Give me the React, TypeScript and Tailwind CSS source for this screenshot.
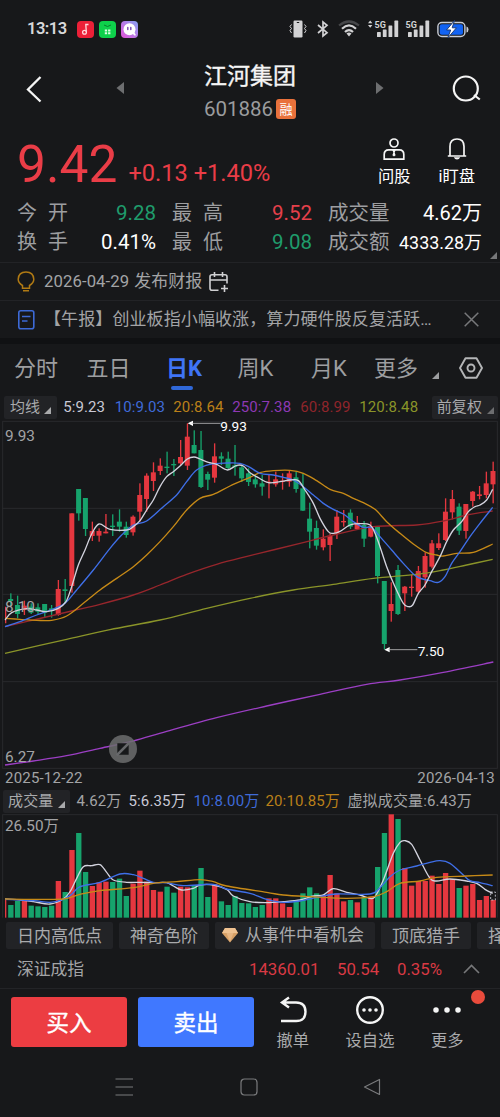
import type { ReactNode } from "react";

type Point = [number, number];

// [direction, high, body top, body bottom, low, volume top]
type Candle = ["u" | "d", number, number, number, number, number];

const UP = "#e5373f";
const DOWN = "#16a36c";

const candles: Candle[] = [
  ["d", 610, 627, 633, 650, 360],
  ["d", 617, 645, 672, 685, 348],
  ["u", 632, 647, 660, 675, 345],
  ["d", 640, 650, 668, 672, 362],
  ["d", 640, 652, 665, 672, 364],
  ["d", 642, 642, 668, 683, 366],
  ["d", 645, 655, 662, 683, 362],
  ["u", 570, 597, 675, 677, 288],
  ["d", 567, 598, 603, 640, 321],
  ["u", 370, 370, 588, 608, 195],
  ["d", 297, 297, 370, 392, 144],
  ["d", 324, 324, 417, 438, 261],
  ["u", 395, 423, 438, 453, 303],
  ["u", 415, 423, 437, 455, 292],
  ["u", 372, 425, 430, 430, 290],
  ["d", 373, 407, 411, 438, 291],
  ["d", 358, 395, 410, 425, 281],
  ["d", 395, 410, 435, 443, 333],
  ["u", 376, 380, 427, 437, 296],
  ["u", 280, 315, 365, 395, 257],
  ["u", 250, 257, 327, 365, 290],
  ["u", 217, 247, 273, 303, 315],
  ["u", 205, 227, 243, 255, 320],
  ["d", 185, 230, 234, 250, 305],
  ["d", 207, 222, 226, 258, 323],
  ["u", 150, 201, 220, 225, 305],
  ["u", 100, 140, 227, 240, 307],
  ["d", 121, 165, 190, 190, 300],
  ["d", 123, 180, 291, 294, 249],
  ["d", 245, 252, 269, 300, 336],
  ["u", 160, 199, 263, 278, 297],
  ["d", 187, 199, 206, 225, 349],
  ["d", 185, 206, 234, 240, 360],
  ["d", 165, 226, 231, 257, 333],
  ["d", 225, 232, 265, 276, 354],
  ["d", 235, 250, 276, 288, 355],
  ["d", 255, 268, 283, 293, 366],
  ["d", 255, 280, 290, 317, 360],
  ["u", 255, 275, 279, 325, 340],
  ["u", 245, 268, 283, 290, 340],
  ["u", 250, 272, 276, 299, 355],
  ["u", 240, 250, 275, 290, 366],
  ["d", 245, 262, 297, 308, 345],
  ["d", 250, 295, 362, 363, 325],
  ["d", 338, 386, 425, 475, 307],
  ["d", 392, 414, 467, 479, 325],
  ["u", 418, 446, 472, 481, 330],
  ["u", 430, 437, 465, 513, 270],
  ["u", 360, 380, 430, 447, 325],
  ["u", 360, 393, 397, 410, 349],
  ["d", 358, 368, 410, 417, 345],
  ["u", 378, 398, 417, 420, 352],
  ["d", 393, 405, 446, 471, 336],
  ["u", 395, 408, 440, 442, 335],
  ["d", 408, 411, 558, 580, 246],
  ["d", 573, 573, 762, 778, 144],
  ["u", 577, 642, 663, 695, 88],
  ["d", 525, 540, 672, 675, 102],
  ["u", 588, 590, 610, 663, 249],
  ["u", 555, 590, 594, 620, 302],
  ["u", 528, 543, 605, 610, 288],
  ["u", 487, 498, 562, 593, 288],
  ["u", 450, 460, 530, 535, 272],
  ["u", 430, 460, 474, 480, 297],
  ["u", 325, 365, 450, 453, 264],
  ["u", 300, 327, 367, 388, 282],
  ["d", 340, 350, 422, 435, 309],
  ["u", 342, 342, 423, 446, 302],
  ["u", 303, 305, 333, 350, 297],
  ["u", 288, 313, 318, 328, 345],
  ["u", 245, 280, 315, 325, 333],
  ["u", 215, 243, 283, 340, 345],
];

const candleX = (i: number) => 32 + i * 20.38;

const priceLines: { color: string; points: Point[] }[] = [
  {
    color: "#9c3fc4",
    points: [[15, 1125], [100, 1113], [200, 1097], [300, 1075], [400, 1053], [500, 1024], [650, 983], [800, 948], [960, 913], [1100, 883], [1200, 870], [1330, 847], [1480, 816]],
  },
  {
    color: "#8a9429",
    points: [[15, 790], [200, 748], [330, 719], [480, 690], [620, 655], [750, 625], [880, 600], [1000, 583], [1120, 565], [1250, 553], [1330, 540], [1400, 525], [1478, 508]],
  },
  {
    color: "#97262c",
    points: [[15, 710], [100, 690], [215, 663], [300, 643], [400, 615], [480, 585], [560, 553], [650, 523], [750, 497], [900, 460], [1000, 435], [1120, 410], [1250, 405], [1330, 393], [1400, 375], [1440, 368], [1478, 363]],
  },
  {
    color: "#c78a17",
    points: [[15, 685], [60, 688], [110, 691], [155, 691], [200, 678], [250, 640], [300, 600], [350, 565], [400, 530], [440, 495], [480, 455], [520, 410], [560, 360], [600, 325], [640, 313], [690, 288], [750, 262], [780, 248], [820, 242], [870, 241], [910, 250], [950, 272], [990, 298], [1030, 310], [1060, 325], [1090, 338], [1125, 358], [1160, 395], [1200, 430], [1240, 462], [1280, 488], [1310, 495], [1330, 498], [1370, 490], [1420, 487], [1478, 462]],
  },
  {
    color: "#3f6fe8",
    points: [[15, 710], [60, 695], [110, 675], [160, 657], [195, 640], [230, 600], [280, 540], [330, 475], [365, 435], [400, 405], [440, 393], [490, 350], [530, 315], [560, 275], [590, 240], [630, 223], [680, 219], [720, 220], [750, 232], [780, 250], [820, 255], [850, 262], [880, 270], [910, 290], [940, 315], [970, 340], [1000, 358], [1030, 372], [1060, 395], [1090, 412], [1115, 413], [1140, 440], [1175, 480], [1210, 520], [1250, 560], [1290, 572], [1315, 577], [1335, 560], [1355, 520], [1380, 485], [1410, 440], [1440, 400], [1478, 352]],
  },
  {
    color: "#d3d3de",
    points: [[15, 690], [35, 668], [80, 656], [110, 660], [140, 665], [175, 655], [198, 635], [215, 590], [235, 525], [255, 480], [275, 432], [297, 402], [330, 418], [380, 420], [400, 410], [420, 392], [440, 360], [460, 330], [480, 290], [500, 260], [520, 245], [540, 228], [562, 207], [582, 201], [600, 207], [625, 217], [650, 223], [682, 240], [710, 226], [730, 228], [750, 248], [775, 263], [805, 278], [840, 275], [870, 270], [895, 272], [915, 300], [940, 340], [960, 385], [985, 425], [1000, 430], [1020, 424], [1050, 405], [1080, 401], [1110, 405], [1125, 430], [1140, 470], [1160, 530], [1185, 590], [1210, 640], [1225, 650], [1238, 645], [1255, 610], [1275, 585], [1295, 545], [1320, 500], [1340, 455], [1360, 420], [1385, 395], [1405, 365], [1425, 350], [1440, 345], [1460, 330], [1478, 298]],
  },
];

const volumeLines: { color: string; points: Point[] }[] = [
  {
    color: "#d3d3de",
    points: [[15, 342], [50, 344], [100, 350], [150, 357], [190, 342], [210, 320], [230, 280], [250, 245], [275, 242], [300, 239], [320, 262], [340, 285], [380, 292], [420, 292], [460, 293], [500, 293], [520, 303], [545, 315], [580, 310], [600, 300], [640, 300], [680, 313], [700, 333], [750, 350], [800, 353], [850, 350], [900, 345], [940, 333], [970, 330], [1000, 311], [1040, 322], [1080, 330], [1110, 340], [1125, 335], [1150, 285], [1180, 205], [1200, 172], [1215, 167], [1235, 178], [1260, 225], [1290, 280], [1310, 288], [1350, 282], [1400, 288], [1430, 295], [1455, 313], [1478, 325]],
  },
  {
    color: "#3f6fe8",
    points: [[15, 343], [100, 347], [150, 352], [190, 343], [215, 328], [240, 305], [300, 292], [360, 267], [400, 269], [430, 280], [460, 292], [500, 293], [550, 302], [640, 298], [680, 312], [750, 325], [800, 343], [850, 352], [900, 348], [960, 335], [1010, 327], [1110, 327], [1140, 308], [1170, 275], [1200, 255], [1250, 243], [1290, 232], [1320, 227], [1350, 235], [1390, 270], [1410, 287], [1440, 293], [1478, 302]],
  },
  {
    color: "#c78a17",
    points: [[15, 342], [100, 343], [190, 342], [240, 328], [300, 317], [400, 308], [460, 295], [530, 290], [600, 284], [640, 290], [680, 303], [800, 322], [850, 330], [930, 335], [1040, 340], [1120, 335], [1160, 320], [1200, 295], [1260, 288], [1310, 277], [1400, 273], [1478, 270]],
  },
];

// Catmull-Rom through the points, written as cubic beziers
function smooth(points: Point[]) {
  let d = `M${points[0][0]} ${points[0][1]}`;
  for (let i = 0; i < points.length - 1; i++) {
    const p0 = points[i - 1] ?? points[i];
    const p1 = points[i];
    const p2 = points[i + 1];
    const p3 = points[i + 2] ?? p2;
    d += `C${p1[0] + (p2[0] - p0[0]) / 6} ${p1[1] + (p2[1] - p0[1]) / 6} ${p2[0] - (p3[0] - p1[0]) / 6} ${p2[1] - (p3[1] - p1[1]) / 6} ${p2[0]} ${p2[1]}`;
  }
  return d;
}

function Corner({ className = "" }: { className?: string }) {
  return (
    <svg className={className} width="7" height="7" viewBox="0 0 7 7">
      <path d="M7 0v7H0z" fill="currentColor" />
    </svg>
  );
}

function Signal({ updown = false }: { updown?: boolean }) {
  return (
    <svg width="31" height="20" viewBox="0 0 31 20" fill="#d2d2d4">
      {updown && <path d="M0 4.2 2.2 1.4 4.4 4.2zM0 6 2.2 8.8 4.4 6z" />}
      <text x="6.5" y="8.5" fontSize="9" fontWeight="700" className="font-['Roboto']">
        5G
      </text>
      <rect x="9" y="13" width="3.8" height="5" rx=".6" />
      <rect x="14.8" y="10.5" width="3.8" height="7.5" rx=".6" />
      <rect x="20.5" y="6.5" width="3.8" height="11.5" rx=".6" />
      <rect x="26.4" y="1.6" width="3.8" height="16.4" rx=".6" />
    </svg>
  );
}

function StatusBar() {
  return (
    <div className="flex h-[58px] items-center pl-[27px] pr-[31px]">
      <span className="w-[50px] text-[16.5px] font-semibold tracking-[-0.5px] text-[#d8d8da]">13:13</span>
      <div className="flex gap-[5px]">
        <svg width="17" height="17" viewBox="0 0 17 17">
          <rect width="17" height="17" rx="4" fill="#ec2038" />
          <path d="M11.5 3.5H8.8l.5 7.5" fill="none" stroke="#ffd9dc" strokeWidth="1.3" />
          <circle cx="7.5" cy="11.3" r="1.9" fill="none" stroke="#ffd9dc" strokeWidth="1.3" />
        </svg>
        <svg width="17" height="17" viewBox="0 0 17 17">
          <rect width="17" height="17" rx="4" fill="#0ed04b" />
          <path d="M5 4Q8.5 7 12 4" fill="none" stroke="#087d2d" strokeWidth="1" />
          <path d="M5.8 8.5h2.3v2H5.8zM9.1 8.5h2.3v2H9.1zM5.8 11.3h2.3v2H5.8zM9.1 11.3h2.3v2H9.1z" fill="#d9ffe2" />
        </svg>
        <svg width="17" height="17" viewBox="0 0 17 17">
          <defs>
            <linearGradient id="chat" x1="0" y1="1" x2="1" y2="0">
              <stop offset="0" stopColor="#e553d8" />
              <stop offset=".5" stopColor="#b77ae6" />
              <stop offset="1" stopColor="#86a2f5" />
            </linearGradient>
          </defs>
          <rect width="17" height="17" rx="4" fill="url(#chat)" />
          <circle cx="8.5" cy="8.3" r="6" fill="#fff" />
          <path d="m11 11 2 3.500 2-.3-2-3.500z" fill="#fff" />
          <path d="M6.8 6.500v2M9.8 6.500v2" stroke="#7d4fb8" strokeWidth="1.5" strokeLinecap="round" />
        </svg>
      </div>
      <div className="ml-auto flex items-center">
        <svg className="mr-[10px]" width="18" height="18" viewBox="0 0 18 18">
          <rect x="4.5" y=".5" width="9" height="17" rx="1.2" fill="#d2d2d4" />
          <path d="M7.8 2.5h2.4" stroke="#17181a" />
          <path d="M2.5 4.5 1 6.500l1.500 2L1 10.500l1.500 2.500M15.500 4.500l1.500 2-1.500 2 1.500 2-1.500 2.500" fill="none" stroke="#d2d2d4" />
        </svg>
        <svg className="mr-[9px]" width="12" height="18" viewBox="0 0 12 18">
          <path d="m1 5 9 7.700-4 3.300V2l4 3.300L1 13" fill="none" stroke="#d2d2d4" strokeWidth="1.7" />
        </svg>
        <svg className="mr-2" width="22" height="18" viewBox="0 0 22 18" fill="none" strokeWidth="2.2">
          <path d="M1 5.500Q11-2.500 21 5.500" stroke="#46474a" />
          <path d="M4 8.700Q11 2.200 18 8.700" stroke="#d2d2d4" />
          <path d="M7 12Q11 8 15 12" stroke="#d2d2d4" />
          <path d="m8.500 13.500 2.500 3 2.500-3q-2.500-2-5 0z" fill="#d2d2d4" stroke="none" />
        </svg>
        <Signal updown />
        <Signal />
        <svg className="ml-[7px]" width="32" height="19" viewBox="0 0 32 19">
          <rect x=".9" y="2.5" width="27" height="14" rx="4" fill="none" stroke="#c9cdd6" strokeWidth="1.4" />
          <rect x="2.8" y="4.3" width="23.2" height="10.4" rx="2" fill="#1263f3" />
          <path d="M29.500 6.500q2 .5 2 3t-2 3z" fill="#c9cdd6" />
          <path d="M17.500.5 9.500 10h4.200l-3 8 8.800-10.200h-4.300z" fill="#fff" stroke="#1d3c78" strokeWidth="1" />
        </svg>
      </div>
    </div>
  );
}

function Header() {
  return (
    <header className="flex h-[74px] items-center pl-[26px] pr-[19px]">
      <svg className="mt-[-12px]" width="16" height="28" viewBox="0 0 16 28">
        <path d="M14.500 2 2 14.500 14.500 26.500" fill="none" stroke="#f5f5f5" strokeWidth="2.300" />
      </svg>
      <div className="ml-[74px] flex w-[268px] items-center justify-between">
        <svg className="mt-[-14px]" width="8" height="12" viewBox="0 0 8 12">
          <path d="M8 0v12L.5 6z" fill="#6d6e70" />
        </svg>
        <div className="mt-[-6px] flex flex-col items-center">
          <h1 className="text-[23px] leading-[34px] text-[#f5f5f5] [-webkit-text-stroke:0.35px_#f5f5f5]">江河集团</h1>
          <div className="flex h-[30px] items-center gap-[3px]">
            <span className="text-[20.5px] text-[#9b9c9e]">601886</span>
            <span className="flex size-[20px] items-center justify-center rounded-[3px] bg-[#e9713b] text-[13px] leading-none text-white">
              融
            </span>
          </div>
        </div>
        <svg className="mt-[-14px]" width="8" height="12" viewBox="0 0 8 12">
          <path d="M0 0v12l7.500-6z" fill="#6d6e70" />
        </svg>
      </div>
      <svg className="mt-[-12px] ml-auto" width="29" height="28" viewBox="0 0 29 28" fill="none" stroke="#f5f5f5" strokeWidth="2.2">
        <circle cx="13.8" cy="13.5" r="12" />
        <path d="m22 20 5.800 4.500" />
      </svg>
    </header>
  );
}

function Quote() {
  return (
    <div className="flex h-[66px] justify-between pl-[17px] pr-[25px]">
      <div className="flex items-baseline text-[#ea3d47]">
        <span className="text-[51.5px] leading-[66px]">9.42</span>
        <span className="ml-[11px] -translate-y-px text-[23.6px]">+0.13 +1.40%</span>
      </div>
      <div className="flex gap-[28px] pt-[6px] text-[16.3px] leading-[22px] text-white">
        <div className="flex flex-col items-center">
          <svg width="22" height="22" viewBox="0 0 22 22" fill="none" stroke="#f5f5f5" strokeWidth="1.7">
            <circle cx="11" cy="5" r="4" />
            <path d="M1.200 21.200v-4.700q0-4.700 4.500-4.700h10.600q4.500 0 4.500 4.700v4.700z" />
            <path d="m9.300 12 1 2.500-.9 2.700L11 18.500l1.600-1.300-.9-2.700 1-2.500z" fill="#f5f5f5" stroke="none" />
          </svg>
          <span className="mt-[6px]">问股</span>
        </div>
        <div className="flex flex-col items-center">
          <svg width="20" height="22" viewBox="0 0 20 22" fill="none" stroke="#f5f5f5" strokeWidth="1.7">
            <path d="M3 17.800V8.500Q3 1 10 1t7 7.500v9.300M.8 18h18.400" />
            <path d="M6.800 19.300h6.400q-1 2.300-3.200 2.300t-3.200-2.300z" fill="#f5f5f5" stroke="none" />
          </svg>
          <span className="mt-[6px]">i盯盘</span>
        </div>
      </div>
    </div>
  );
}

function Label({ children }: { children: string }) {
  return (
    <span className="flex w-[51px] justify-between text-[20px] text-[#9d9ea0]">
      {children.split("").map((c) => (
        <span key={c}>{c}</span>
      ))}
    </span>
  );
}

function Stats() {
  return (
    <div className="relative grid h-[64px] grid-cols-[50px_89px_16px_51px_89px_16px_64px_1fr] content-start pl-[17px] pr-[18px] pt-px text-[20.5px] leading-[29px]">
      <Label>今开</Label>
      <span className="text-right text-[#1f9c6c]">9.28</span>
      <span />
      <Label>最高</Label>
      <span className="text-right text-[#e5404b]">9.52</span>
      <span />
      <span className="text-[#9d9ea0]">成交量</span>
      <span className="text-right text-[20px] text-white">4.62万</span>
      <Label>换手</Label>
      <span className="text-right text-white">0.41%</span>
      <span />
      <Label>最低</Label>
      <span className="text-right text-[#1f9c6c]">9.08</span>
      <span />
      <span className="text-[#9d9ea0]">成交额</span>
      <span className="whitespace-nowrap text-right text-[17.9px] text-white">4333.28万</span>
      <Corner className="absolute bottom-[3px] right-[3px] text-[#77787a]" />
    </div>
  );
}

function Notices() {
  return (
    <div className="text-[#a3a4a6]">
      <div className="flex h-[38px] items-center border-t border-[#222326] pl-[17px] text-[16.7px]">
        <svg width="18" height="21" viewBox="0 0 18 21" fill="none" stroke="#b07a14" strokeWidth="1.5">
          <path d="M5.500 14.500Q1.200 12 1.200 8.300 1.500 1 9 1t7.800 7.300q0 3.700-4.300 6.200v2.700h-7zM6 19.700h6" />
        </svg>
        <span className="ml-[9px] tracking-[0.1px]">2026-04-29</span>
        <span className="ml-[5px] text-[17px]">发布财报</span>
        <svg className="ml-[7px]" width="20" height="20" viewBox="0 0 20 20" fill="none" stroke="#d0d0d2" strokeWidth="1.6">
          <path d="M9.500 18.200H3q-2 0-2-2V4.800q0-2 2-2h13q2 0 2 2v6.700M1 8h17M5.500 0v5M13.500 0v5M15.500 13v7M12 16.500h7" />
        </svg>
      </div>
      <div className="flex h-[38px] items-center border-t border-[#222326] pl-[18px] pr-[21px] text-[17px]">
        <svg width="17" height="20" viewBox="0 0 17 20" fill="none" stroke="#3d6ad6" strokeWidth="1.6">
          <rect x=".8" y=".8" width="15" height="18" rx="2" />
          <path d="M4 6.500h8.500M4 11h5.500" />
        </svg>
        <span className="ml-[9px] whitespace-nowrap tracking-[0.1px]">【午报】创业板指小幅收涨，算力硬件股反复活跃…</span>
        <svg className="ml-auto shrink-0" width="15" height="15" viewBox="0 0 15 15">
          <path d="m.7.7 13.600 13.600M14.300.7.700 14.300" stroke="#77787a" strokeWidth="1.5" />
        </svg>
      </div>
    </div>
  );
}

const tabs = ["分时", "五日", "日K", "周K", "月K", "更多"];

function Tabs() {
  return (
    <nav className="grid h-[55px] grid-cols-[72px_73px_78px_65px_82px_52px_1fr] border-t-[6px] border-[#101113] text-center text-[22px] leading-[50px] text-[#9d9ea0]">
      {tabs.map((tab) =>
        tab === "日K" ? (
          <span key={tab} className="relative font-bold text-[#3f74f5]">
            {tab}
            <i className="absolute bottom-[4px] left-[calc(50%-2px)] h-[4px] w-[22px] -translate-x-1/2 rounded-full bg-[#3068d8]" />
          </span>
        ) : (
          <span key={tab}>{tab}</span>
        ),
      )}
      <span className="flex h-[49px] items-center pl-[10px]">
        <Corner className="mt-[13px]" />
        <svg className="ml-[20px] mt-[-2px]" width="24" height="22" viewBox="0 0 24 22" fill="none" stroke="#b4b5b7" strokeWidth="1.9">
          <path d="M6.500 1.200h11L23 11l-5.500 9.800h-11L1 11z" strokeLinejoin="round" />
          <circle cx="12" cy="11" r="3.5" />
        </svg>
      </span>
    </nav>
  );
}

function Pill({ children }: { children: ReactNode }) {
  return (
    <span className="flex h-[23px] items-center rounded-[2px] bg-[#222326] text-[15px] text-[#a9aaac]">{children}</span>
  );
}

function PriceChart() {
  return (
    <section>
      <div className="flex h-[27px] items-center pl-[4px] pr-[2px] pt-[1px] text-[15px] tracking-[0.1px]">
        <Pill>
          <span className="ml-[6px]">均线</span>
          <Corner className="ml-[4px] mr-[6px] mt-[6px]" />
        </Pill>
        <span className="ml-[6px] w-[51.5px] text-[#c9c9d6]">5:9.23</span>
        <span className="w-[58.5px] text-[#3f6bd8]">10:9.03</span>
        <span className="w-[59px] text-[#bb8019]">20:8.64</span>
        <span className="w-[68px] text-[#8e38b4]">250:7.38</span>
        <span className="w-[59px] text-[#8f252b]">60:8.99</span>
        <span className="text-[#8a9429]">120:8.48</span>
        <span className="ml-auto">
          <Pill>
            <span className="ml-[5px]">前复权</span>
            <Corner className="ml-[5px] mr-[4px] mt-[6px] text-[#6d6e70]" />
          </Pill>
        </span>
      </div>
      <svg className="block overflow-visible font-['Roboto']" width="500" height="349" viewBox="0 90 1500 1047">
        <path
          d="M7 94H1493M7 355H1493M7 613H1493M7 875H1493M7 1135H1493M8 94V1135M1492 94V1135"
          stroke="#292a2d"
          strokeWidth="3"
        />
        <path d="M17 650V700" stroke={UP} strokeWidth="4" />
        {candles.map(([dir, high, top, bottom, low], i) => (
          <g key={i} fill={dir === "u" ? UP : DOWN}>
            <rect x={candleX(i) - 1.5} y={high} width="4" height={low - high} />
            <rect x={candleX(i) - 7.5} y={top} width="15" height={bottom - top} />
          </g>
        ))}
        {priceLines.map(({ color, points }) => (
          <path key={color} d={smooth(points)} fill="none" stroke={color} strokeWidth="4" />
        ))}
        <g fill="#a3a4a6" fontSize="46">
          <text x="15" y="152">9.93</text>
          <text x="15" y="665">8.10</text>
          <text x="15" y="1116">6.27</text>
        </g>
        <g fill="#fff" fontSize="41">
          <path d="M563 100l16-8v16zM1153 779l16-8v16z" />
          <path d="M575 100h87M1165 779h87" stroke="#b8b8ba" strokeWidth="2.5" />
          <text x="661" y="123">9.93</text>
          <text x="1253" y="798">7.50</text>
        </g>
        <circle cx="369" cy="1077" r="42" fill="#6c6d6f" fillOpacity=".85" />
        <path d="M352 1094v-34h34zM386 1060v34h-34z" fill="#17181a" />
        <path d="m350 1096 38-38" stroke="#66676a" strokeWidth="8" />
      </svg>
      <div className="flex h-[19px] items-center justify-between pl-[5px] pr-[5px] text-[15px] tracking-[0.2px] text-[#a3a4a6]">
        <span>2025-12-22</span>
        <span>2026-04-13</span>
      </div>
    </section>
  );
}

function VolumeChart() {
  return (
    <section>
      <div className="flex h-[26px] items-center whitespace-nowrap pl-[3px] text-[15px] tracking-[0.15px]">
        <Pill>
          <span className="ml-[5px]">成交量</span>
          <Corner className="ml-[5px] mr-[5px] mt-[6px]" />
        </Pill>
        <span className="ml-[6px] w-[52px] text-[#a3a4a6]">4.62万</span>
        <span className="w-[65px] text-[#c9c9d6]">5:6.35万</span>
        <span className="w-[72px] text-[#3f6bd8]">10:8.00万</span>
        <span className="w-[82px] text-[#bb8019]">20:10.85万</span>
        <span className="text-[#a3a4a6]">虚拟成交量:6.43万</span>
      </div>
      <svg className="block font-['Roboto','Noto_Sans_CJK_SC',sans-serif]" width="500" height="104" viewBox="0 87 1500 312">
        <path d="M7 89H1493M8 89V398M1492 89V398" stroke="#292a2d" strokeWidth="3" />
        <rect x="15" y="342" width="4" height="56" fill={UP} />
        {candles.map(([dir, , , , , vol], i) => (
          <rect key={i} x={candleX(i) - 7.5} y={vol} width="16" height={398 - vol} fill={dir === "u" ? UP : DOWN} />
        ))}
        {volumeLines.map(({ color, points }) => (
          <path key={color} d={smooth(points)} fill="none" stroke={color} strokeWidth="4" />
        ))}
        <rect x="1472" y="321" width="14" height="24" fill="none" stroke="#d3d3de" strokeWidth="2.5" strokeDasharray="6 5" />
        <text x="15" y="137" fontSize="46" fill="#a3a4a6">
          26.50万
        </text>
      </svg>
    </section>
  );
}

function Chips() {
  return (
    <div className="flex h-[32px] gap-[6px] overflow-hidden whitespace-nowrap pl-[6px] pt-[4px] text-[17px] leading-[29px] text-[#a9aaac]">
      <span className="h-[27px] w-[107px] shrink-0 rounded-[2px] bg-[#222326] text-center">日内高低点</span>
      <span className="h-[27px] w-[90px] shrink-0 rounded-[2px] bg-[#222326] text-center">神奇色阶</span>
      <span className="flex h-[27px] w-[160px] shrink-0 items-center rounded-[2px] bg-[#222326] pl-[7px]">
        <svg className="mr-[7px]" width="16" height="15" viewBox="0 0 16 15">
          <path d="M3 0h10l3 5-8 9.500L0 5z" fill="#d7a066" />
          <path d="M3 0h10l3 5H0z" fill="#efc291" />
          <path d="m4.500 5 3.500 9 3.500-9z" fill="#e6b582" />
        </svg>
        从事件中看机会
      </span>
      <span className="h-[27px] w-[90px] shrink-0 rounded-[2px] bg-[#222326] text-center">顶底猎手</span>
      <span className="h-[27px] w-[90px] shrink-0 rounded-[2px] bg-[#222326] pl-[11px]">择</span>
    </div>
  );
}

function IndexBar() {
  return (
    <div className="flex h-[39px] items-center border-b border-[#232427] pl-[17px] pr-[20px] pt-[2px] text-[16.8px]">
      <span className="text-[#a3a4a6]">深证成指</span>
      <span className="ml-auto w-[88px] text-[#d93a44]">14360.01</span>
      <span className="w-[60px] text-[#d93a44]">50.54</span>
      <span className="w-[66px] text-[#d93a44]">0.35%</span>
      <svg className="mt-[-3px]" width="17" height="10" viewBox="0 0 17 10">
        <path d="m1 9 7.500-7.500L16 9" fill="none" stroke="#77787a" strokeWidth="1.6" />
      </svg>
    </div>
  );
}

function Action({ label, children }: { label: string; children: ReactNode }) {
  return (
    <div className="flex flex-1 flex-col items-center text-[16.3px] leading-[20px] text-[#a9aaac]">
      <svg width="30" height="30" viewBox="0 0 30 30" fill="none" stroke="#f5f5f5" strokeWidth="2.4">
        {children}
      </svg>
      <span className="mt-[6px]">{label}</span>
    </div>
  );
}

function Actions() {
  return (
    <div className="flex h-[67px] pl-[11px] pr-[14px] pt-[8px]">
      <button className="h-[50px] w-[116px] rounded-[3px] bg-[#ec3d42] pt-[3px] text-[22.5px] text-white [-webkit-text-stroke:0.4px_#fff]">
        买入
      </button>
      <button className="ml-[11px] h-[50px] w-[116px] rounded-[3px] bg-[#4078ff] pt-[3px] text-[22.5px] text-white [-webkit-text-stroke:0.4px_#fff]">
        卖出
      </button>
      <div className="-mt-[2px] flex flex-1">
        <Action label="撤单">
          <path d="M11 2.500 4 7.500l7 5M4 7.500h14q9.500 0 9.500 9.300T18 26H3" />
        </Action>
        <Action label="设自选">
          <circle cx="15" cy="15" r="12.8" />
          <path d="M9 15h.01M15 15h.01M21 15h.01" strokeWidth="3.6" strokeLinecap="round" />
        </Action>
        <Action label="更多">
          <path d="M4 15h.01M15 15h.01M26 15h.01" strokeWidth="5.5" strokeLinecap="round" />
        </Action>
      </div>
    </div>
  );
}

function NavBar() {
  return (
    <div className="flex h-[61px] items-center justify-between pl-[115px] pr-[119px]">
      <svg width="19" height="18" viewBox="0 0 19 18">
        <path d="M.5 1H18M.5 9H18M.5 17H18" stroke="#7a7b7d" strokeWidth="1.2" />
      </svg>
      <svg width="18" height="18" viewBox="0 0 18 18">
        <rect x="1" y="1" width="16" height="16" rx="3.5" fill="none" stroke="#7a7b7d" strokeWidth="1.2" />
      </svg>
      <svg width="18" height="18" viewBox="0 0 18 18">
        <path d="M16.500 1.500v15L1.500 9z" fill="none" stroke="#7a7b7d" strokeWidth="1.2" strokeLinejoin="round" />
      </svg>
    </div>
  );
}

export default function App() {
  return (
    <div className="h-[1117px] w-[500px] overflow-hidden bg-[#17181a] font-['Roboto','Noto_Sans_CJK_SC',sans-serif]">
      <StatusBar />
      <Header />
      <Quote />
      <Stats />
      <Notices />
      <Tabs />
      <PriceChart />
      <VolumeChart />
      <Chips />
      <IndexBar />
      <div className="relative">
        <Actions />
        <i className="absolute right-[15px] top-[1px] size-[14px] rounded-full bg-[#e94b3c]" />
      </div>
      <NavBar />
    </div>
  );
}
